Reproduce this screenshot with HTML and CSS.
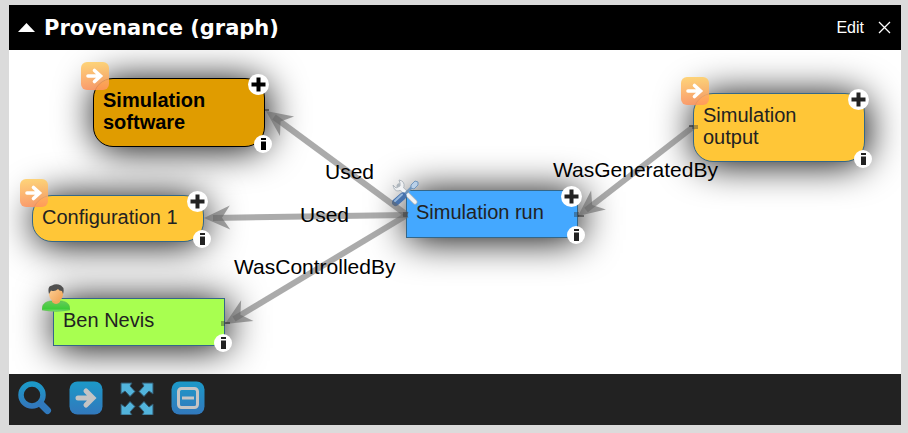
FILE: index.html
```html
<!DOCTYPE html>
<html lang="en">
<head>
<meta charset="utf-8">
<title>Provenance (graph)</title>
<link rel="stylesheet" href="styles.css">
</head>
<body>
<svg class="defs" aria-hidden="true">
  <defs>
    <linearGradient id="blue" x1="0" y1="0" x2="0" y2="1">
      <stop offset="0" stop-color="#1c99c8"/><stop offset="1" stop-color="#3278bc"/>
    </linearGradient>
    <linearGradient id="orange" x1="0" y1="0" x2="0" y2="1">
      <stop offset="0" stop-color="#ffcf68"/><stop offset="1" stop-color="#ff955f"/>
    </linearGradient>
    <linearGradient id="green" x1="0" y1="0" x2="0" y2="1">
      <stop offset="0" stop-color="#66ca5c"/><stop offset="0.75" stop-color="#3dcc38"/><stop offset="1" stop-color="#8fe083"/>
    </linearGradient>
    <linearGradient id="skin" x1="0" y1="0" x2="1" y2="1">
      <stop offset="0" stop-color="#ffd39a"/><stop offset="1" stop-color="#f0a052"/>
    </linearGradient>
    <symbol id="artifact" viewBox="0 0 28 28">
      <rect width="28" height="28" rx="6" fill="url(#orange)" opacity="0.88"/>
      <path d="M7 14H18M13.500 8.500L19.500 14L13.500 19.500" fill="none" stroke="#fff" stroke-width="3.600" stroke-linecap="round"/>
    </symbol>
    <symbol id="plus" viewBox="0 0 21 21">
      <circle cx="10.500" cy="10.500" r="10.500" fill="#fff"/>
      <path d="M10.500 3.500V17.500M3.500 10.500H17.500" stroke="currentColor" stroke-width="4"/>
    </symbol>
    <symbol id="info" viewBox="0 0 18 18">
      <circle cx="9" cy="9" r="9" fill="#fff"/>
      <path d="M7 3H12V5H7ZM7 6.500H12V15H7Z" fill="currentColor"/>
    </symbol>
  </defs>
</svg>
<main class="panel">
  <header class="panel-head">
    <svg class="caret" viewBox="0 0 17 9" aria-hidden="true"><path d="M8.500 0L17 9H0Z" fill="#fff"/></svg>
    <h1>Provenance (graph)</h1>
    <button class="head-button" type="button">Edit</button>
    <button class="head-button" type="button" aria-label="Close"><svg class="close" viewBox="0 0 13 13"><path d="M1 1L12 12M12 1L1 12" stroke="#fff" stroke-width="1.300"/></svg></button>
  </header>

  <section class="canvas">
    <article class="node node-software artifact selected">
      <svg class="kind"><use href="#artifact"/></svg>
      Simulation software
      <button class="plus" type="button" aria-label="Expand"><svg><use href="#plus"/></svg></button>
      <button class="info" type="button" aria-label="Information"><svg><use href="#info"/></svg></button>
    </article>
    <article class="node node-config artifact">
      <svg class="kind"><use href="#artifact"/></svg>
      Configuration 1
      <button class="plus" type="button" aria-label="Expand"><svg><use href="#plus"/></svg></button>
      <button class="info" type="button" aria-label="Information"><svg><use href="#info"/></svg></button>
    </article>
    <article class="node node-agent">
      <svg class="kind" viewBox="0 0 28 28">
        <path d="M0 26C0 20 3 18 8 17L20 17C25 18 28 20 28 26Q14 29 0 26Z" fill="url(#green)" stroke="#58b94b" stroke-width="0.500"/>
        <path d="M10 14H18V18Q14 22 10 18Z" fill="#f2a85d"/>
        <path d="M7 7Q7 2 14 2Q21 2 21 7V11Q20 17 14 17.500Q8 17 7 11Z" fill="url(#skin)"/>
        <path d="M7 10Q5 2 10 1.500Q14-1 19 1.500Q23 4 21 10L20 7Q17 7 16 5Q13 8 9 6.500Z" fill="#505050"/>
      </svg>
      Ben Nevis
      <button class="info" type="button" aria-label="Information"><svg><use href="#info"/></svg></button>
    </article>
    <article class="node node-run">
      <svg class="kind" viewBox="0 0 28 28">
        <path d="M7 7L23 23" stroke="#aeb6bd" stroke-width="5" stroke-linecap="round"/>
        <path d="M7 1Q13 2 12 8Q10 12 6 12Q2 12 1 6L4 9L8 7L8 4Z" fill="#eef0f2" stroke="#aeb6bd" stroke-width="1"/>
        <path d="M9 9L23 23" stroke="#f2f4f6" stroke-width="3.400" stroke-linecap="round"/>
        <path d="M12 16L20 8" stroke="#7196bd" stroke-width="2.500"/>
        <path d="M19 6L23 2L26 3L26 6L22 10L19 9Z" fill="#b9d0e8" stroke="#7196bd" stroke-width="1"/>
        <path d="M3.500 23.500L11 17" stroke="#4772ad" stroke-width="7" stroke-linecap="round"/>
        <path d="M3 22L10 15.500" stroke="#94b6dc" stroke-width="2" stroke-linecap="round"/>
      </svg>
      Simulation run
      <button class="plus" type="button" aria-label="Expand"><svg><use href="#plus"/></svg></button>
      <button class="info" type="button" aria-label="Information"><svg><use href="#info"/></svg></button>
    </article>
    <article class="node node-output artifact">
      <svg class="kind"><use href="#artifact"/></svg>
      Simulation output
      <button class="plus" type="button" aria-label="Expand"><svg><use href="#plus"/></svg></button>
      <button class="info" type="button" aria-label="Information"><svg><use href="#info"/></svg></button>
    </article>

    <svg class="edges" aria-hidden="true">
      <defs>
        <path id="head" d="M0 0L26-12L18 0L26 12Z" fill="#666" fill-opacity="0.600"/>
      </defs>
      <g stroke="#666" stroke-opacity="0.550" stroke-width="6">
        <path d="M398 165L265 67"/>
        <path d="M398 165L204 168"/>
        <path d="M398 165L225 269"/>
        <path d="M684 77L577 160"/>
      </g>
      <use href="#head" transform="translate(257 61) rotate(36)"/>
      <use href="#head" transform="translate(195 168) rotate(-1)"/>
      <use href="#head" transform="translate(216 274) rotate(-31)"/>
      <use href="#head" transform="translate(569 166) rotate(-38)"/>
      <g fill="#333" fill-opacity="0.400">
        <path d="M394 162h5v5h-5zM212 271h4v5h-4zM565 162h5v5h-5zM683 75h6v4h-6z"/>
      </g>
      <path d="M256 60h4M216 273h5M569 166h6M680 76h4" stroke="#222" stroke-width="1"/>
    </svg>
    <span class="edge-label label-used-software">Used</span>
    <span class="edge-label label-used-config">Used</span>
    <span class="edge-label label-controlled">WasControlledBy</span>
    <span class="edge-label label-generated">WasGeneratedBy</span>
  </section>

  <footer class="toolbar">
    <button type="button" aria-label="Zoom"><svg viewBox="0 0 34 34"><circle cx="14" cy="14" r="11" fill="none" stroke="url(#blue)" stroke-width="5.500"/><path d="M23 23L29.500 29.500" stroke="#3079bd" stroke-width="7" stroke-linecap="round"/></svg></button>
    <button type="button" aria-label="Next"><svg viewBox="0 0 34 34"><rect x="0.500" y="0.500" width="33" height="33" rx="8" fill="url(#blue)"/><path d="M9 17H23M17 10L24 17L17 24" fill="none" stroke="#c4c4c4" stroke-width="5" stroke-linecap="round"/></svg></button>
    <button type="button" aria-label="Fit to window"><svg viewBox="0 0 34 34"><g fill="#52b4dc" stroke="#31556a" stroke-width="1"><path id="corner" d="M1 2H12L10 5L15 10.500L10 15.500L5 10L1 13Z"/><use href="#corner" transform="matrix(-1 0 0 1 34 0)"/><use href="#corner" transform="matrix(1 0 0 -1 0 36)"/><use href="#corner" transform="matrix(-1 0 0 -1 34 36)"/></g></svg></button>
    <button type="button" aria-label="Collapse"><svg viewBox="0 0 34 34"><rect x="0.500" y="0.500" width="33" height="33" rx="8" fill="url(#blue)"/><rect x="7.500" y="7.500" width="19" height="19" rx="3" fill="none" stroke="#c4c4c4" stroke-width="3"/><path d="M11 17H23" stroke="#c4c4c4" stroke-width="3"/></svg></button>
  </footer>
</main>
</body>
</html>
```
FILE: styles.css
```css
* {
  box-sizing: border-box;
}

body {
  margin: 0;
  padding: 5px 7px 8px 9px;
  min-height: 100vh;
  display: flex;
  background: #dbdbdb;
  font-family: "Liberation Sans", Arial, sans-serif;
}

svg {
  display: block;
}

button {
  margin: 0;
  padding: 0;
  border: 0;
  background: none;
  color: inherit;
  font: inherit;
  cursor: pointer;
}

.defs {
  position: absolute;
  width: 0;
  height: 0;
}

.panel {
  flex: 1;
  display: flex;
  flex-direction: column;
  background: #fff;
}

.panel-head {
  display: flex;
  align-items: center;
  gap: 14px;
  min-height: 45px;
  padding: 0 10px 0 9px;
  background: #000;
  color: #fff;
}

.panel-head h1 {
  flex: 1;
  margin: 0;
  font: bold 21px/26px "DejaVu Sans", Verdana, sans-serif;
}

.caret {
  width: 17px;
  height: 9px;
  margin-right: -5px;
}

.head-button {
  font-size: 16px;
  line-height: 20px;
}

.close {
  width: 13px;
  height: 13px;
}

.canvas {
  position: relative;
  flex: 1;
  min-height: 324px;
  overflow: hidden;
}

.node {
  position: absolute;
  width: 172px;
  padding: 10px 40px 14px 9px;
  border: 1px solid #346789;
  background: #44a8ff;
  box-shadow: 2px 2px 38px #000;
  color: #222;
  font-size: 20px;
  line-height: 22px;
}

.artifact {
  padding-bottom: 13px;
  border-radius: 20px;
  background: #ffc637;
}

.selected {
  border-color: #000;
  background: #e09c00;
  color: #000;
  font-weight: bold;
}

.node-software {
  left: 84px;
  top: 28px;
}

.node-config {
  left: 23px;
  top: 145px;
  padding-right: 20px;
}

.node-agent {
  left: 44px;
  top: 248px;
  background: #a8ff50;
}

.node-run {
  left: 397px;
  top: 140px;
  padding-right: 20px;
}

.node-output {
  left: 684px;
  top: 43px;
}

.kind {
  position: absolute;
  left: -13px;
  top: -17px;
  width: 28px;
  height: 28px;
}

.node-agent .kind {
  left: -12px;
  top: -15px;
}

.node-run .kind {
  left: -15px;
  top: -12px;
}

.plus {
  position: absolute;
  top: -5px;
  right: -5px;
}

.plus svg {
  width: 21px;
  height: 21px;
}

.info {
  position: absolute;
  right: -8px;
  bottom: -7px;
}

.info svg {
  width: 18px;
  height: 18px;
}

.edges {
  position: absolute;
  left: 0;
  top: 0;
  width: 100%;
  height: 100%;
  pointer-events: none;
}

.edge-label {
  position: absolute;
  color: #000;
  font-size: 21px;
  line-height: 24px;
}

.label-used-software {
  left: 316px;
  top: 110px;
}

.label-used-config {
  left: 291px;
  top: 153px;
}

.label-controlled {
  left: 225px;
  top: 205px;
}

.label-generated {
  left: 544px;
  top: 108px;
}

.toolbar {
  display: flex;
  gap: 17px;
  padding: 7px 9px 10px;
  background: #222;
}

.toolbar svg {
  width: 34px;
  height: 34px;
}
```
